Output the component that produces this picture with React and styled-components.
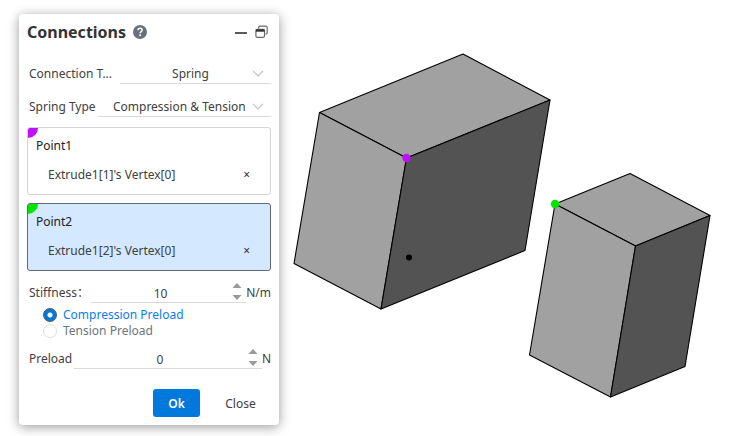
import React, { useState } from 'react';
import styled, { createGlobalStyle } from 'styled-components';

const POINTS = [
    { id: 'point1', name: 'Point1', color: '#bf10ff', vertex: "Extrude1[1]'s Vertex[0]" },
    { id: 'point2', name: 'Point2', color: '#00e600', vertex: "Extrude1[2]'s Vertex[0]" },
];

function SelectField({ id, label, labelWidth, options }) {
    return (
        <Row>
            <Label htmlFor={id} $width={labelWidth}>{label}</Label>
            <Control>
                <Select id={id} defaultValue={options[0]}>
                    {options.map(option => <option key={option}>{option}</option>)}
                </Select>
                <Chevron viewBox="0 0 12 7" aria-hidden="true">
                    <path d="M1 0.8 L6 5.8 L11 0.8" />
                </Chevron>
            </Control>
        </Row>
    );
}

function NumberField({ id, label, unit, initial }) {
    const [value, setValue] = useState(initial);
    const step = amount => setValue(Number(value) + amount);

    return (
        <Row>
            <Label htmlFor={id}>{label}</Label>
            <Control>
                <NumberInput id={id} type="number" value={value} onChange={e => setValue(e.target.value)} />
                <Stepper>
                    <StepButton type="button" aria-label="Increase" onClick={() => step(1)}>
                        <svg viewBox="0 0 10 5"><path d="M5 0 L9.5 5 H0.5 Z" /></svg>
                    </StepButton>
                    <StepButton type="button" aria-label="Decrease" onClick={() => step(-1)}>
                        <svg viewBox="0 0 10 5"><path d="M0.5 0 H9.5 L5 5 Z" /></svg>
                    </StepButton>
                </Stepper>
            </Control>
            <Unit>{unit}</Unit>
        </Row>
    );
}

function PointBox({ point, active, onSelect }) {
    const [vertex, setVertex] = useState(point.vertex);

    return (
        <PointCard $active={active}>
            <Corner $color={point.color} />
            <PointName type="button" aria-pressed={active} onClick={onSelect}>{point.name}</PointName>
            {vertex && (
                <VertexRow>
                    <span>{vertex}</span>
                    <RemoveButton type="button" aria-label="Remove" onClick={() => setVertex('')}>×</RemoveButton>
                </VertexRow>
            )}
        </PointCard>
    );
}

function ConnectionsPanel() {
    const [activePoint, setActivePoint] = useState('point2');
    const [preload, setPreload] = useState('Compression');

    return (
        <Panel onSubmit={e => e.preventDefault()}>
            <Header>
                <Title>Connections</Title>
                <IconButton type="button" aria-label="Help">
                    <svg width="14" height="14" viewBox="0 0 14 14">
                        <circle cx="7" cy="7" r="7" fill="#69727c" />
                        <path d="M4.9 5.2 C5 3.8 6 3.2 7.1 3.2 C8.3 3.2 9.2 3.9 9.2 5 C9.2 6.6 7.1 6.5 7.1 8.3" fill="none" stroke="#fff" strokeWidth="1.5" />
                        <circle cx="7.1" cy="10.3" r="0.95" fill="#fff" />
                    </svg>
                </IconButton>
                <WindowButtons>
                    <IconButton type="button" aria-label="Minimize">
                        <svg width="12" height="14" viewBox="0 0 12 14">
                            <path d="M0 8 H12" stroke="#5a5a5a" strokeWidth="2" />
                        </svg>
                    </IconButton>
                    <IconButton type="button" aria-label="Restore">
                        <svg width="13" height="14" viewBox="0 0 13 14" fill="none" stroke="#6a6a6a" strokeWidth="1.2">
                            <path d="M3.6 3.6 V2.6 Q3.6 1.1 5.1 1.1 H10.6 Q12.2 1.1 12.2 2.6 V7.4 Q12.2 9 10.4 9" />
                            <rect x="0.9" y="4.3" width="8.6" height="8" rx="1.4" />
                            <path d="M0.9 5.5 H9.5" stroke="#333" strokeWidth="2.4" />
                        </svg>
                    </IconButton>
                </WindowButtons>
            </Header>

            <Fields>
                <SelectField id="connection-type" label="Connection T..." labelWidth="89px" options={['Spring', 'Rigid']} />
                <SelectField id="spring-type" label="Spring Type" options={['Compression & Tension', 'Compression', 'Tension']} />
            </Fields>

            <Points>
                {POINTS.map(point => (
                    <PointBox
                        key={point.id}
                        point={point}
                        active={activePoint === point.id}
                        onSelect={() => setActivePoint(point.id)}
                    />
                ))}
            </Points>

            <NumberField id="stiffness" label="Stiffness：" unit="N/m" initial={10} />
            <RadioGroup role="radiogroup" aria-label="Preload type">
                {['Compression', 'Tension'].map(type => (
                    <RadioLabel key={type} $checked={preload === type}>
                        <Radio name="preload-type" checked={preload === type} onChange={() => setPreload(type)} />
                        {type} Preload
                    </RadioLabel>
                ))}
            </RadioGroup>
            <NumberField id="preload" label="Preload" unit="N" initial={0} />

            <Footer>
                <OkButton type="submit">Ok</OkButton>
                <CloseButton type="button">Close</CloseButton>
            </Footer>
        </Panel>
    );
}

function Solids() {
    return (
        <Scene viewBox="279 0 466 436" preserveAspectRatio="xMinYMin meet" role="img" aria-label="Model view">
            <g stroke="#000" strokeWidth="1.1" strokeLinejoin="round">
                <polygon points="319.5,112.5 463,54 550,100 406.5,158" fill="#a1a1a1" />
                <polygon points="319.5,112.5 406.5,158 381,309 294,263.5" fill="#a1a1a1" />
                <polygon points="406.5,158 550,100 525,250.5 381,309" fill="#535353" />
                <polygon points="555,204 630,173.5 710,215.5 635.5,246" fill="#a1a1a1" />
                <polygon points="555,204 635.5,246 610.5,397 529.5,355" fill="#a1a1a1" />
                <polygon points="635.5,246 710,215.5 685,366.5 610.5,397" fill="#535353" />
            </g>
            <circle cx="406.5" cy="158" r="4.2" fill="#bf10ff" />
            <circle cx="555" cy="204" r="4.2" fill="#00e600" />
            <circle cx="409" cy="257.5" r="3" fill="#000" />
        </Scene>
    );
}

function App() {
    return (
        <Page>
            <GlobalStyle />
            <ConnectionsPanel />
            <Solids />
        </Page>
    );
}

// styles
const GlobalStyle = createGlobalStyle`
    * {
        box-sizing: border-box;
    }
    body {
        margin: 0;
        background: #fff;
        color: #404040;
        font-family: 'Noto Sans', 'Noto Sans CJK SC', sans-serif;
        font-size: 12px;
        line-height: 22px;
    }
    button, input, select {
        margin: 0;
        padding: 0;
        border: none;
        background: none;
        color: inherit;
        font: inherit;
    }
    button {
        cursor: pointer;
    }
`;

const Page = styled.main`
    display: flex;
    align-items: flex-start;
    min-height: 100vh;
    overflow: hidden;
`;

const Panel = styled.form`
    position: relative;
    flex: none;
    width: 260px;
    margin: 14px 0 0 19px;
    padding: 8px;
    border-radius: 4px;
    background: #fff;
    box-shadow: 0 2px 12px rgba(0, 0, 0, 0.4);
`;

const Scene = styled.svg`
    display: block;
    flex: 1;
    min-width: 0;
`;

const Header = styled.header`
    display: flex;
    align-items: center;
    gap: 7px;
    height: 20px;
    padding-right: 3px;
`;

const Title = styled.h1`
    margin: 0;
    color: #333;
    font-size: 16px;
    font-weight: 700;
`;

const IconButton = styled.button`
    display: flex;
`;

const WindowButtons = styled.div`
    display: flex;
    gap: 8px;
    margin-left: auto;
`;

const Fields = styled.div`
    display: flex;
    flex-direction: column;
    gap: 12px;
    margin-top: 21px;
`;

const Row = styled.div`
    display: flex;
    gap: 2px;
    height: 21px;
    padding-left: 2px;
`;

const Label = styled.label`
    flex: none;
    width: ${props => props.$width || 'auto'};
    white-space: nowrap;
`;

const Control = styled.div`
    display: grid;
    flex: 1;
    align-items: center;
    min-width: 0;
    border-bottom: 1px solid #d9d9de;

    > * {
        grid-area: 1 / 1;
    }
`;

const Select = styled.select`
    width: 100%;
    height: 20px;
    padding: 2px 10px 0 0;
    appearance: none;
    line-height: 18px;
    text-align: center;
    text-align-last: center;
`;

const Chevron = styled.svg`
    justify-self: end;
    width: 12px;
    height: 7px;
    margin-right: 7px;
    fill: none;
    stroke: #c0c4cc;
    stroke-width: 1.2;
    pointer-events: none;
`;

const NumberInput = styled.input`
    width: 100%;
    height: 20px;
    padding: 2px 16px 0 0;
    appearance: textfield;
    line-height: 18px;
    text-align: center;

    &::-webkit-inner-spin-button {
        display: none;
    }
`;

const Stepper = styled.div`
    display: flex;
    flex-direction: column;
    justify-self: end;
    gap: 7px;
    margin: 0 4px 2px 0;
`;

const StepButton = styled.button`
    display: flex;

    svg {
        width: 10px;
        height: 5px;
        fill: #999;
    }
`;

const Unit = styled.span`
    margin-left: -2px;
`;

const Points = styled.div`
    display: flex;
    flex-direction: column;
    gap: 8px;
    margin: 10px 0 11px;
`;

const PointCard = styled.section`
    position: relative;
    height: 68px;
    padding: 7px 8px;
    overflow: hidden;
    border: 1px solid ${props => (props.$active ? '#606872' : '#d4d4d4')};
    border-radius: 3px;
    background: ${props => (props.$active ? '#d4e8ff' : '#fff')};
`;

const Corner = styled.span`
    position: absolute;
    top: 0;
    left: 0;
    width: 10px;
    height: 10px;
    border-bottom-right-radius: 10px;
    background: ${props => props.$color};
`;

const PointName = styled.button`
    display: block;
    color: #222;
`;

const VertexRow = styled.div`
    display: flex;
    justify-content: space-between;
    margin-top: 7px;
    padding: 0 12px;
`;

const RemoveButton = styled.button`
    color: #333;
`;

const RadioGroup = styled.div`
    display: flex;
    flex-direction: column;
    margin: 4px 0 9px;
    padding-left: 16px;
`;

const RadioLabel = styled.label`
    display: flex;
    align-items: center;
    gap: 6px;
    height: 16px;
    color: ${props => (props.$checked ? '#0a7cf0' : '#6c757d')};
    line-height: 16px;
`;

const Radio = styled.input.attrs({ type: 'radio' })`
    width: 14px;
    height: 14px;
    appearance: none;
    border: 1px solid #dcdfe6;
    border-radius: 50%;
    background: #fff;

    &:checked {
        border-color: #55585c;
        background: radial-gradient(circle, #fff 2px, #0078dc 3px);
    }
`;

const Footer = styled.footer`
    display: flex;
    justify-content: flex-end;
    gap: 10px;
    margin-top: 20px;
`;

const DialogButton = styled.button`
    height: 28px;
    padding-top: 1px;
    border-radius: 3px;
`;

const OkButton = styled(DialogButton)`
    width: 47px;
    background: #0078dc;
    color: #fff;
    font-weight: 600;
`;

const CloseButton = styled(DialogButton)`
    width: 61px;
`;

export default App;
